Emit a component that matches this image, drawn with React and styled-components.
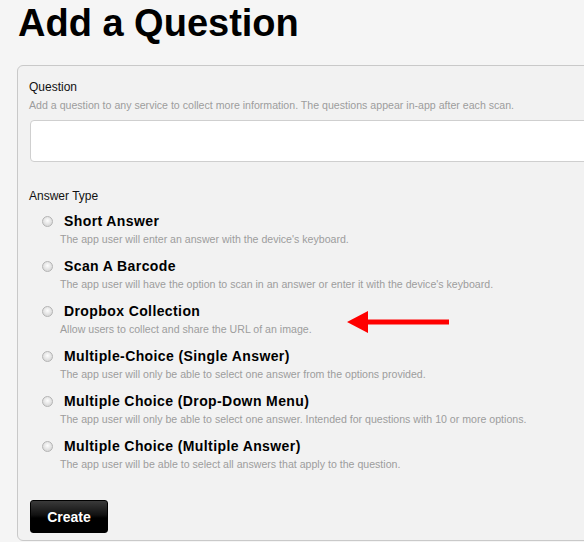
import React from "react"
import styled, { createGlobalStyle } from "styled-components"

const GlobalStyle = createGlobalStyle`
  html, body {
    margin: 0;
    padding: 0;
    background: #f5f5f5;
    font-family: "Liberation Sans", Arial, sans-serif;
    overflow: hidden;
  }
`

const Page = styled.div`
  width: 584px;
  height: 542px;
  overflow: hidden;
`

const Title = styled.h1`
  margin: 1px 0 0 18px;
  font-size: 38px;
  line-height: 44px;
  font-weight: bold;
  color: #000;
`

const Panel = styled.div`
  position: relative;
  margin: 20px 0 0 17px;
  width: 620px;
  height: 476px;
  box-sizing: border-box;
  padding: 14px 11px 0;
  background: #f2f2f2;
  border: 1px solid #c9c9c9;
  border-radius: 6px;
`

const Label = styled.div`
  font-size: 12px;
  line-height: 15px;
  color: #111;
`

const Help = styled.div`
  font-size: 10.6px;
  line-height: 14px;
  color: #9d9d9d;
  margin-top: ${p => p.$top || 0}px;
`

const Input = styled.div`
  margin: 8px 0 0 1px;
  height: 42px;
  box-sizing: border-box;
  background: #fff;
  border: 1px solid #cfcfcf;
  border-radius: 4px;
`

const AnswerLabel = styled(Label)`
  margin-top: 27px;
`

const Options = styled.div`
  margin-top: 8px;
  display: flex;
  flex-direction: column;
  gap: 11px;
`

const Option = styled.div`
  position: relative;
  padding-left: 13px;
`

const OptionHead = styled.label`
  display: flex;
  align-items: center;
  height: 18px;
`

const Radio = styled.span`
  width: 9px;
  height: 9px;
  border-radius: 50%;
  border: 1px solid #b4b4b4;
  background: radial-gradient(circle at 50% 40%, #fdfdfd 0%, #e2e2e2 55%, #cfcfcf 100%);
  flex: none;
`

const OptionTitle = styled.span`
  margin-left: 11px;
  font-size: 14px;
  font-weight: bold;
  color: #000;
  letter-spacing: 0.4px;
`

const OptionHelp = styled(Help)`
  margin-left: 18px;
  margin-top: 2px;
`

const Arrow = styled.svg`
  position: absolute;
  left: 318px;
  top: 8px;
`

const CreateButton = styled.button`
  margin: 29px 0 0 1px;
  width: 78px;
  height: 33px;
  border: 1px solid #000;
  border-radius: 3px;
  background: linear-gradient(#3a3a3a 0%, #111 45%, #000 55%, #000 100%);
  color: #fff;
  font-family: "Liberation Sans", Arial, sans-serif;
  font-size: 14px;
  font-weight: bold;
  cursor: pointer;
`

const options = [
  ["Short Answer", "The app user will enter an answer with the device's keyboard."],
  ["Scan A Barcode", "The app user will have the option to scan in an answer or enter it with the device's keyboard."],
  ["Dropbox Collection", "Allow users to collect and share the URL of an image.", true],
  ["Multiple-Choice (Single Answer)", "The app user will only be able to select one answer from the options provided."],
  ["Multiple Choice (Drop-Down Menu)", "The app user will only be able to select one answer. Intended for questions with 10 or more options."],
  ["Multiple Choice (Multiple Answer)", "The app user will be able to select all answers that apply to the question."],
]

const App = () => (
  <Page>
    <GlobalStyle />
    <Title>Add a Question</Title>
    <Panel>
      <Label>Question</Label>
      <Help $top={3}>
        Add a question to any service to collect more information. The questions appear in-app after each scan.
      </Help>
      <Input />
      <AnswerLabel>Answer Type</AnswerLabel>
      <Options>
        {options.map(([title, help, marked]) => (
          <Option key={title}>
            <OptionHead>
              <Radio />
              <OptionTitle>{title}</OptionTitle>
            </OptionHead>
            <OptionHelp>{help}</OptionHelp>
            {marked && (
              <Arrow width="104" height="24" viewBox="0 0 104 24">
                <path d="M0,12L21,1L21,9.5L102,9.5L102,14.5L21,14.5L21,23Z" fill="#f00" />
              </Arrow>
            )}
          </Option>
        ))}
      </Options>
      <CreateButton>Create</CreateButton>
    </Panel>
  </Page>
)

export default App
